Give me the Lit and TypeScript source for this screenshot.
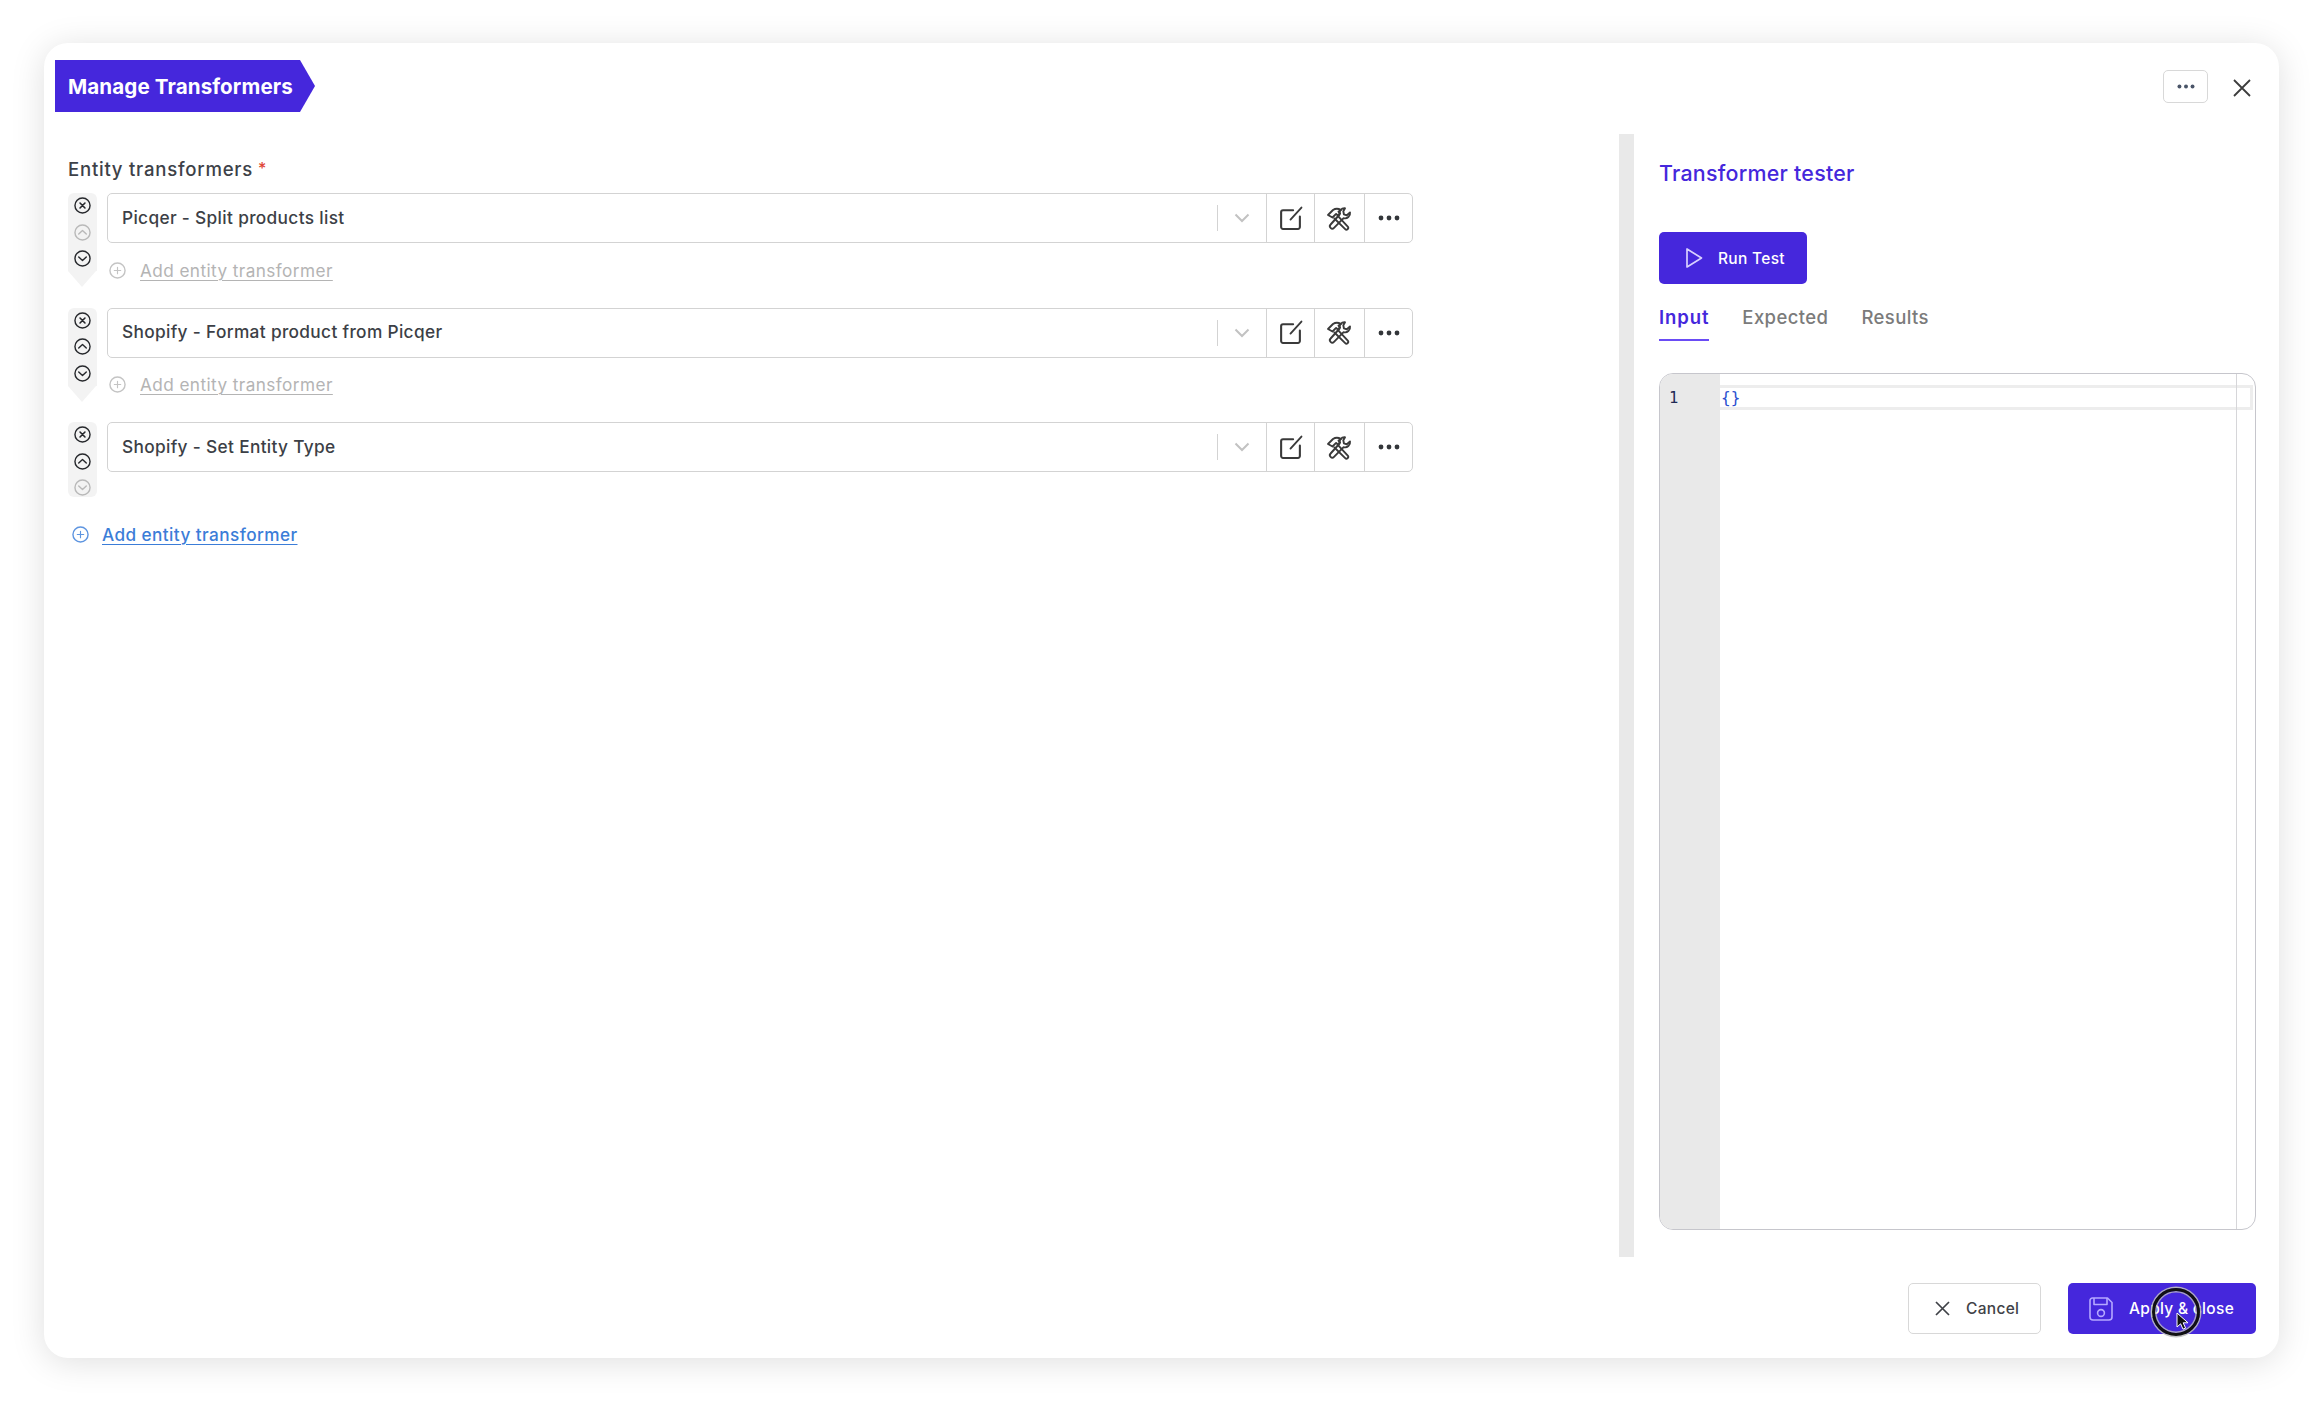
import { LitElement, html, css, svg } from "lit";
import { customElement } from "lit/decorators.js";

const circle = (inner: unknown, cls = "") => html`<svg class="ci ${cls}" viewBox="0 0 18 18" fill="none" stroke="currentColor" stroke-width="1.5" stroke-linecap="round" stroke-linejoin="round"><circle cx="9" cy="9" r="8"/>${inner}</svg>`;
const xI = svg`<path d="M6.4 6.4l5.2 5.2M11.6 6.4l-5.2 5.2" stroke-width="1.7"/>`;
const upI = svg`<path d="M5 10.6L9 6.8l4 3.8"/>`;
const downI = svg`<path d="M5 7.4L9 11.2l4-3.8"/>`;
const plusI = svg`<path d="M9 5.6v6.8M5.6 9h6.8" stroke-width="1.2"/>`;

const dots = html`<svg class="dots" viewBox="0 0 22 6" fill="currentColor"><circle cx="3" cy="3" r="2.4"/><circle cx="11" cy="3" r="2.4"/><circle cx="19" cy="3" r="2.4"/></svg>`;
const editI = html`<svg class="ic" viewBox="0 0 24 24" fill="none" stroke="currentColor" stroke-width="2" stroke-linecap="round" stroke-linejoin="round"><path d="M14.5 4H4.8A1.8 1.8 0 0 0 3 5.8v14.4A1.8 1.8 0 0 0 4.8 22h14.4a1.8 1.8 0 0 0 1.8-1.8V10"/><path d="M12 13L22.5 1.5" stroke-width="1.8"/></svg>`;
const toolsI = html`<svg class="ic tools" viewBox="0 0 28 24" fill="none" stroke="currentColor" stroke-width="1.9" stroke-linejoin="round" stroke-linecap="round"><path d="M2 8.5L7 3.5C9.5 1.8 12.5 2 15 3.5L12.5 5l1.6 1.8-2.2 2.2-1.8-1.6-3.6 3.6z"/><path d="M11.8 9.4L22 20.4a1.8 1.8 0 0 1-2.8 2.2L8.4 12"/><path d="M19 1.8a5 5 0 0 0-5.4 6.2L4.6 18a2.4 2.4 0 0 0 3.4 3.4l9.6-9.8A5 5 0 0 0 24 6l-3.2 2.8-2.9-1-.6-3z"/></svg>`;

const rows = [
  { name: "Picqer - Split products list", up: false, down: true, add: true },
  { name: "Shopify - Format product from Picqer", up: true, down: true, add: true },
  { name: "Shopify - Set Entity Type", up: true, down: false, add: false },
];

@customElement("app-root")
export class AppRoot extends LitElement {
  static styles = css`
    :host { display: block; height: 1402px; box-sizing: border-box; padding: 43px 43px 44px 44px; background: #fff; font-family: "Inter", "Liberation Sans", sans-serif; color: #3c3f46; }
    .modal { position: relative; height: 100%; background: #fff; border-radius: 24px; box-shadow: 0 4px 34px rgba(0,0,0,.13); display: flex; flex-direction: column; }
    .header { height: 91px; box-sizing: border-box; padding: 17px 28px 0 11px; display: flex; align-items: flex-start; }
    .ribbon { height: 52px; width: 260px; box-sizing: border-box; background: #4527dc; color: #fff; font-weight: 700; font-size: 20.6px; letter-spacing: .1px; padding-left: 13px; display: flex; align-items: center; clip-path: polygon(0 0, 245px 0, 100% 50%, 245px 100%, 0 100%); }
    .spacer { flex: 1; }
    .more { width: 45px; height: 33px; margin-top: 10px; border: 1.5px solid #d8d8d8; border-radius: 5px; box-sizing: border-box; display: flex; align-items: center; justify-content: center; color: #4a5568; }
    .more .dots { width: 18px; height: 5px; }
    .close { margin: 19px 0 0 25px; width: 18px; height: 18px; color: #3c3c3c; }
    .body { flex: 1; min-height: 0; display: flex; }
    .left { flex: 1; padding: 24px 0 0 24px; }
    .label { font-size: 18.6px; font-weight: 500; line-height: 23px; letter-spacing: .75px; margin-bottom: 12px; color: #3d4148; display: flex; }
    .label b { color: #e04434; font-weight: 500; margin-left: 5px; font-size: 16px; line-height: 20px; }
    .row { display: flex; gap: 10px; margin-bottom: 20.5px; }
    .row.last { margin-bottom: 25px; }
    .strip { width: 29px; flex: none; display: flex; flex-direction: column; }
    .strip-body { background: #f3f3f3; border-radius: 6px 6px 0 0; padding: 4px 0 0; height: 74px; display: flex; flex-direction: column; align-items: center; gap: 9.5px; }
    .last .strip-body { border-radius: 6px; height: 71px; }
    .tip { width: 0; height: 0; border-left: 14.5px solid transparent; border-right: 14.5px solid transparent; border-top: 16px solid #f3f3f3; }
    .ci { width: 17px; height: 17px; flex: none; color: #26282c; }
    .ci.off { color: #b9b9b9; }
    .main { width: 1306px; }
    .select { height: 50px; box-sizing: border-box; border: 1.5px solid #d3d3d3; border-radius: 5px; display: flex; align-items: stretch; color: #3c3f46; }
    .value { flex: 1; padding: 0 0 2px 14px; font-size: 17.3px; font-weight: 500; letter-spacing: .33px; display: flex; align-items: center; }
    .chev { width: 48px; display: flex; align-items: center; justify-content: center; position: relative; color: #c2c2c2; }
    .sep { width: 1.5px; height: 26px; background: #d3d3d3; align-self: center; }
    .chev svg { width: 16px; height: 10px; }
    .act { display: flex; align-items: center; justify-content: center; border-left: 1.5px solid #d3d3d3; color: #3a3a3a; }
    .a1 { width: 47px; } .a2 { width: 49px; } .a3 { width: 47px; }
    .ic { width: 25px; height: 25px; }
    .ic.tools { width: 28px; height: 25px; }
    .act .dots { width: 22px; height: 6px; color: #33363a; }
    .sub { display: flex; align-items: center; gap: 14px; margin-top: 15px; padding-left: 2px; height: 24px; color: #b4b4b4; font-size: 17.2px; letter-spacing: .42px; font-weight: 400; }
    .sub .ci { color: #c4c4c4; }
    .sub u, .addmain u { text-underline-offset: 3px; text-decoration-thickness: 1px; }
    .addmain { display: flex; align-items: center; gap: 13px; height: 24px; padding-left: 4px; color: #3b7dd8; font-size: 17.2px; letter-spacing: .42px; font-weight: 500; }
    .addmain .ci { color: #5e95e0; }
    .band { width: 15px; flex: none; background: #e9e9e9; }
    .right { width: 597px; flex: none; margin: 0 23px 0 25px; padding: 25px 0 27px; box-sizing: border-box; display: flex; flex-direction: column; }
    .title { font-size: 21.4px; line-height: 28px; font-weight: 500; color: #4527dc; letter-spacing: .25px; }
    .btn { height: 51px; box-sizing: border-box; border-radius: 5px; display: flex; align-items: center; font-size: 15.5px; font-weight: 500; letter-spacing: .3px; }
    .primary { background: #4527dc; color: #fff; }
    .run { width: 148px; height: 52px; margin-top: 45px; padding-left: 26px; gap: 15px; }
    .run svg { width: 18px; height: 22px; color: #d8d0ff; }
    .tabs { display: flex; gap: 33px; margin-top: 16px; height: 41px; font-size: 18.5px; font-weight: 500; letter-spacing: .4px; color: #7b7b7b; }
    .tab { box-sizing: border-box; height: 41px; padding-top: 6px; }
    .tab.on { color: #4527dc; font-weight: 600; letter-spacing: .9px; border-bottom: 2px solid #6a4cf5; }
    .editor { position: relative; flex: 1; margin-top: 32px; border: 1.5px solid #c6c6cc; border-radius: 14px; overflow: hidden; display: flex; font-family: "DejaVu Sans Mono", "Liberation Mono", monospace; font-size: 16px; }
    .gutter { width: 60px; flex: none; background: #e9e9e9; box-sizing: border-box; padding: 13px 0 0 9px; line-height: 23px; color: #1f2a55; font-weight: 400; font-size: 15.5px; }
    .code { flex: 1; padding: 11px 2px 0 0; }
    .line { height: 25px; box-sizing: border-box; border: solid #ededed; border-width: 3px 3px 3px 0; color: #2b50d0; padding-left: 1px; line-height: 19px; }
    .ruler { position: absolute; top: 0; bottom: 0; right: 18px; width: 1.5px; background: #d6d6d9; }
    .footer { height: 101px; box-sizing: border-box; padding: 26px 23px 0 0; display: flex; justify-content: flex-end; gap: 27px; }
    .cancel { width: 133px; border: 1.5px solid #d8d8d8; padding-left: 26px; gap: 16px; color: #3f4247; }
    .cancel svg { width: 15px; height: 15px; }
    .apply { width: 188px; padding-left: 21px; gap: 16px; }
    .apply svg { width: 24px; height: 24px; color: #b5a8ff; flex: none; }
    .cursor { position: absolute; left: 2108px; top: 1245px; width: 48px; height: 48px; box-sizing: border-box; border-radius: 50%; border: 3px solid #111; box-shadow: 0 0 0 1.5px rgba(190,190,190,.9), inset 0 0 0 1.5px rgba(190,190,190,.8); display: flex; align-items: center; justify-content: center; }
    .cursor svg { width: 13px; height: 18px; flex: none; margin: 18px 0 0 13px; }
  `;

  render() {
    return html`<div class="modal">
      <div class="header">
        <div class="ribbon">Manage Transformers</div>
        <div class="spacer"></div>
        <div class="more">${dots}</div>
        <svg class="close" viewBox="0 0 18 18" fill="none" stroke="currentColor" stroke-width="1.8"><path d="M1 1l16 16M17 1L1 17"/></svg>
      </div>
      <div class="body">
        <div class="left">
          <div class="label">Entity transformers<b>*</b></div>
          ${rows.map((r) => html`<div class="row ${r.add ? "" : "last"}">
            <div class="strip">
              <div class="strip-body">
                ${circle(xI)}
                ${circle(upI, r.up ? "" : "off")}
                ${circle(downI, r.down ? "" : "off")}
              </div>
              ${r.add ? html`<div class="tip"></div>` : ""}
            </div>
            <div class="main">
              <div class="select">
                <div class="value">${r.name}</div>
                <div class="sep"></div>
                <div class="chev"><svg viewBox="0 0 16 10" fill="none" stroke="currentColor" stroke-width="2"><path d="M1.5 1.5L8 8l6.5-6.5"/></svg></div>
                <div class="act a1">${editI}</div>
                <div class="act a2">${toolsI}</div>
                <div class="act a3">${dots}</div>
              </div>
              ${r.add ? html`<div class="sub">${circle(plusI)}<u>Add entity transformer</u></div>` : ""}
            </div>
          </div>`)}
          <div class="addmain">${circle(plusI)}<u>Add entity transformer</u></div>
        </div>
        <div class="band"></div>
        <div class="right">
          <div class="title">Transformer tester</div>
          <div class="btn primary run"><svg viewBox="0 0 18 22" fill="none" stroke="currentColor" stroke-width="1.7" stroke-linejoin="round"><path d="M2 2v18l14.5-9z"/></svg>Run Test</div>
          <div class="tabs"><div class="tab on">Input</div><div class="tab">Expected</div><div class="tab">Results</div></div>
          <div class="editor">
            <div class="gutter">1</div>
            <div class="code"><div class="line">{}</div></div>
            <div class="ruler"></div>
          </div>
        </div>
      </div>
      <div class="footer">
        <div class="btn cancel"><svg viewBox="0 0 15 15" fill="none" stroke="currentColor" stroke-width="1.7"><path d="M1 1l13 13M14 1L1 14"/></svg>Cancel</div>
        <div class="btn primary apply"><svg viewBox="0 0 24 24" fill="none" stroke="currentColor" stroke-width="1.6" stroke-linejoin="round"><path d="M3.5 1h15L23 5.5V20a3 3 0 0 1-3 3H4a3 3 0 0 1-3-3V3.5A2.5 2.5 0 0 1 3.5 1z"/><path d="M5 1v6.5h13V1"/><circle cx="12" cy="16" r="3.4"/></svg>Apply &amp; close</div>
      </div>
      <div class="cursor"><svg viewBox="0 0 13 18"><path d="M1 1v14l3.6-3.2 2.4 5.4 2.6-1.1-2.4-5.3H12z" fill="#111" stroke="#fff" stroke-width="1"/></svg></div>
    </div>`;
  }
}
